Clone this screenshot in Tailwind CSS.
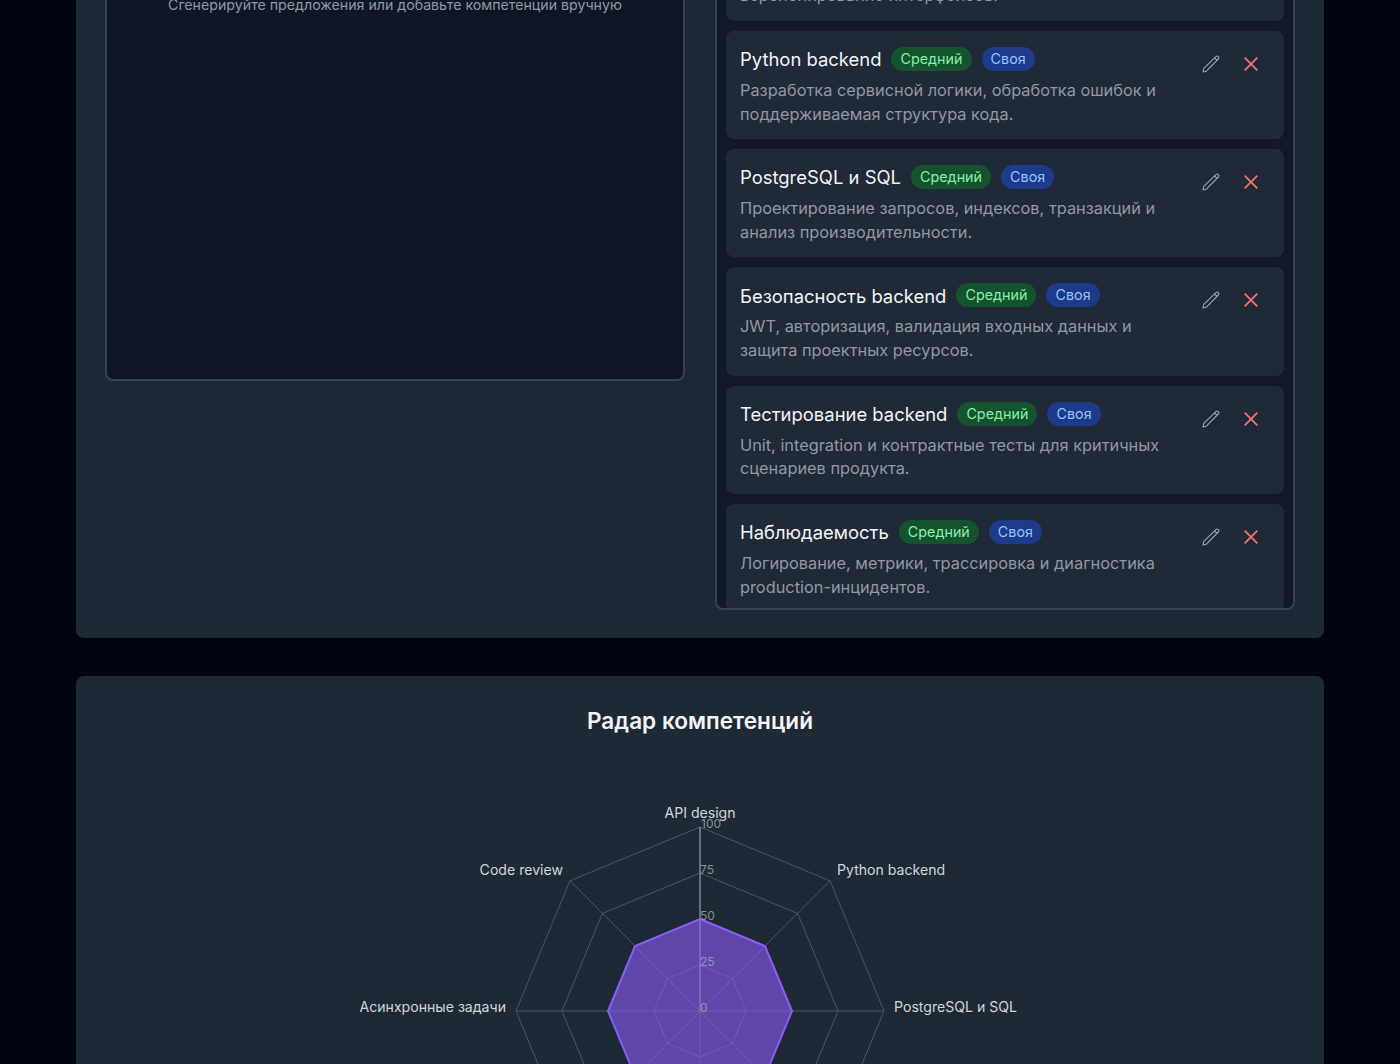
<!DOCTYPE html>
<html lang="ru">
<head>
  <meta charset="UTF-8">
  <title>Компетенции</title>
  <script src="https://cdn.jsdelivr.net/npm/@tailwindcss/browser@4"></script>
</head>
<body class="bg-[#01050f] h-[1064px] overflow-hidden font-['Inter',sans-serif]">
  <svg class="hidden">
    <symbol id="pencil" viewBox="0 0 18 18">
      <path d="M1 17l.8-3.6L13.9 1.6a1.6 1.6 0 0 1 2.4 2.4L4.4 16.2z M12.6 3l2.3 2.3" fill="none" stroke="currentColor" stroke-width="1.1" stroke-linejoin="round"/>
    </symbol>
    <symbol id="cross" viewBox="0 0 14 14">
      <path d="M.7.7l12.6 12.6M13.3.7L.7 13.3" fill="none" stroke="currentColor" stroke-width="1.8"/>
    </symbol>
  </svg>

  <div class="mx-[76px] -mt-[128px] flex flex-col gap-[38px]">

    <!-- Компетенции -->
    <section class="bg-[#1e2936] rounded-lg px-[29px] pt-[29px] pb-[28px] grid grid-cols-2 gap-[30px] items-start">
      <div class="h-[480px] bg-[#0f1626] border-2 border-[#374151] rounded-lg pt-[91px] text-center text-[14.2px] text-[#9198a3]">
        Сгенерируйте предложения или добавьте компетенции вручную
      </div>

      <div class="h-[709px] overflow-hidden bg-[#111827] border-2 border-[#374151] rounded-lg px-[9px] pt-[9.7px] flex flex-col gap-[10px]">
        <div class="shrink-0 h-[108.25px] bg-[#1f2937] rounded-lg px-[14px] pt-[14px] flex justify-between">
          <div class="w-[430px]">
            <div class="flex items-center gap-[10px] h-[28px]">
              <span class="pt-[2px] text-[18.45px] text-[#f3f4f6]">API design</span>
              <span class="px-[9px] h-[24px] leading-[24px] rounded-full bg-[#14532d] text-[#86efac] text-[14.35px]">Средний</span>
              <span class="px-[9px] h-[24px] leading-[24px] rounded-full bg-[#1e3a8a] text-[#93c5fd] text-[14.35px]">Своя</span>
            </div>
            <p class="mt-[6px] text-[16.33px] leading-[23.7px] text-[#9198a3]">Контракты, схемы и<br>версионирование интерфейсов.</p>
          </div>
          <div class="flex gap-[24px] pt-[10px] pr-[12px] items-start">
            <svg class="w-[18px] h-[18px] text-[#9ca3af]"><use href="#pencil"/></svg>
            <svg class="w-[14px] h-[14px] mt-[2px] text-[#f87171]"><use href="#cross"/></svg>
          </div>
        </div>

        <div class="shrink-0 h-[108.25px] bg-[#1f2937] rounded-lg px-[14px] pt-[14px] flex justify-between">
          <div class="w-[430px]">
            <div class="flex items-center gap-[10px] h-[28px]">
              <span class="pt-[2px] text-[18.45px] text-[#f3f4f6]">Python backend</span>
              <span class="px-[9px] h-[24px] leading-[24px] rounded-full bg-[#14532d] text-[#86efac] text-[14.35px]">Средний</span>
              <span class="px-[9px] h-[24px] leading-[24px] rounded-full bg-[#1e3a8a] text-[#93c5fd] text-[14.35px]">Своя</span>
            </div>
            <p class="mt-[6px] text-[16.33px] leading-[23.7px] text-[#9198a3]">Разработка сервисной логики, обработка ошибок и поддерживаемая структура кода.</p>
          </div>
          <div class="flex gap-[24px] pt-[10px] pr-[12px] items-start">
            <svg class="w-[18px] h-[18px] text-[#9ca3af]"><use href="#pencil"/></svg>
            <svg class="w-[14px] h-[14px] mt-[2px] text-[#f87171]"><use href="#cross"/></svg>
          </div>
        </div>

        <div class="shrink-0 h-[108.25px] bg-[#1f2937] rounded-lg px-[14px] pt-[14px] flex justify-between">
          <div class="w-[430px]">
            <div class="flex items-center gap-[10px] h-[28px]">
              <span class="pt-[2px] text-[18.45px] text-[#f3f4f6]">PostgreSQL и SQL</span>
              <span class="px-[9px] h-[24px] leading-[24px] rounded-full bg-[#14532d] text-[#86efac] text-[14.35px]">Средний</span>
              <span class="px-[9px] h-[24px] leading-[24px] rounded-full bg-[#1e3a8a] text-[#93c5fd] text-[14.35px]">Своя</span>
            </div>
            <p class="mt-[6px] text-[16.33px] leading-[23.7px] text-[#9198a3]">Проектирование запросов, индексов, транзакций и анализ производительности.</p>
          </div>
          <div class="flex gap-[24px] pt-[10px] pr-[12px] items-start">
            <svg class="w-[18px] h-[18px] text-[#9ca3af]"><use href="#pencil"/></svg>
            <svg class="w-[14px] h-[14px] mt-[2px] text-[#f87171]"><use href="#cross"/></svg>
          </div>
        </div>

        <div class="shrink-0 h-[108.25px] bg-[#1f2937] rounded-lg px-[14px] pt-[14px] flex justify-between">
          <div class="w-[430px]">
            <div class="flex items-center gap-[10px] h-[28px]">
              <span class="pt-[2px] text-[18.45px] text-[#f3f4f6]">Безопасность backend</span>
              <span class="px-[9px] h-[24px] leading-[24px] rounded-full bg-[#14532d] text-[#86efac] text-[14.35px]">Средний</span>
              <span class="px-[9px] h-[24px] leading-[24px] rounded-full bg-[#1e3a8a] text-[#93c5fd] text-[14.35px]">Своя</span>
            </div>
            <p class="mt-[6px] text-[16.33px] leading-[23.7px] text-[#9198a3]">JWT, авторизация, валидация входных данных и защита проектных ресурсов.</p>
          </div>
          <div class="flex gap-[24px] pt-[10px] pr-[12px] items-start">
            <svg class="w-[18px] h-[18px] text-[#9ca3af]"><use href="#pencil"/></svg>
            <svg class="w-[14px] h-[14px] mt-[2px] text-[#f87171]"><use href="#cross"/></svg>
          </div>
        </div>

        <div class="shrink-0 h-[108.25px] bg-[#1f2937] rounded-lg px-[14px] pt-[14px] flex justify-between">
          <div class="w-[430px]">
            <div class="flex items-center gap-[10px] h-[28px]">
              <span class="pt-[2px] text-[18.45px] text-[#f3f4f6]">Тестирование backend</span>
              <span class="px-[9px] h-[24px] leading-[24px] rounded-full bg-[#14532d] text-[#86efac] text-[14.35px]">Средний</span>
              <span class="px-[9px] h-[24px] leading-[24px] rounded-full bg-[#1e3a8a] text-[#93c5fd] text-[14.35px]">Своя</span>
            </div>
            <p class="mt-[6px] text-[16.33px] leading-[23.7px] text-[#9198a3]">Unit, integration и контрактные тесты для критичных сценариев продукта.</p>
          </div>
          <div class="flex gap-[24px] pt-[10px] pr-[12px] items-start">
            <svg class="w-[18px] h-[18px] text-[#9ca3af]"><use href="#pencil"/></svg>
            <svg class="w-[14px] h-[14px] mt-[2px] text-[#f87171]"><use href="#cross"/></svg>
          </div>
        </div>

        <div class="shrink-0 h-[108.25px] bg-[#1f2937] rounded-lg px-[14px] pt-[14px] flex justify-between">
          <div class="w-[430px]">
            <div class="flex items-center gap-[10px] h-[28px]">
              <span class="pt-[2px] text-[18.45px] text-[#f3f4f6]">Наблюдаемость</span>
              <span class="px-[9px] h-[24px] leading-[24px] rounded-full bg-[#14532d] text-[#86efac] text-[14.35px]">Средний</span>
              <span class="px-[9px] h-[24px] leading-[24px] rounded-full bg-[#1e3a8a] text-[#93c5fd] text-[14.35px]">Своя</span>
            </div>
            <p class="mt-[6px] text-[16.33px] leading-[23.7px] text-[#9198a3]">Логирование, метрики, трассировка и диагностика production-инцидентов.</p>
          </div>
          <div class="flex gap-[24px] pt-[10px] pr-[12px] items-start">
            <svg class="w-[18px] h-[18px] text-[#9ca3af]"><use href="#pencil"/></svg>
            <svg class="w-[14px] h-[14px] mt-[2px] text-[#f87171]"><use href="#cross"/></svg>
          </div>
        </div>
      </div>
    </section>

    <!-- Радар -->
    <section class="bg-[#1e2936] rounded-lg pt-[30px] h-[700px]">
      <h2 class="text-center text-[22.6px] leading-[30px] font-semibold text-[#f3f4f6]">Радар компетенций</h2>
      <svg class="block mt-[10px] mx-auto overflow-visible" width="800" height="560" viewBox="300 746 800 560" font-size="14.1">
        <g fill="none" stroke="#4b5563" stroke-width="1">
          <polygon points="700,965 732.5,978.5 746,1011 732.5,1043.5 700,1057 667.5,1043.5 654,1011 667.5,978.5"/>
          <polygon points="700,919 765,946 792,1011 765,1076 700,1103 635,1076 608,1011 635,946"/>
          <polygon points="700,873 797.6,913.4 838,1011 797.6,1108.6 700,1149 602.4,1108.6 562,1011 602.4,913.4"/>
          <polygon points="700,827 830.1,880.9 884,1011 830.1,1141.1 700,1195 569.9,1141.1 516,1011 569.9,880.9"/>
          <path d="M569.9 880.9L830.1 1141.1M830.1 880.9L569.9 1141.1M516 1011H884M700 1011V1195"/>
        </g>
        <line x1="700" y1="827" x2="700" y2="1011" stroke="#aeb5c0" stroke-width="1"/>
        <polygon points="700,919 765,946 792,1011 765,1076 700,1103 635,1076 608,1011 635,946" fill="#8b5cf6" fill-opacity="0.6" stroke="#8b5cf6" stroke-width="2"/>
        <g fill="#9ca3af" fill-opacity="0.85" font-size="12">
          <text x="701" y="828">100</text>
          <text x="700" y="874">75</text>
          <text x="700" y="920">50</text>
          <text x="700" y="966">25</text>
          <text x="700" y="1012">0</text>
        </g>
        <g fill="#d1d5db">
          <text x="700" y="818" text-anchor="middle">API design</text>
          <text x="837" y="875">Python backend</text>
          <text x="894" y="1012">PostgreSQL и SQL</text>
          <text x="837" y="1158">Безопасность backend</text>
          <text x="700" y="1214" text-anchor="middle">Тестирование backend</text>
          <text x="563" y="1158" text-anchor="end">Наблюдаемость</text>
          <text x="506" y="1012" text-anchor="end">Асинхронные задачи</text>
          <text x="563" y="875" text-anchor="end">Code review</text>
        </g>
      </svg>
    </section>
  </div>
</body>
</html>
